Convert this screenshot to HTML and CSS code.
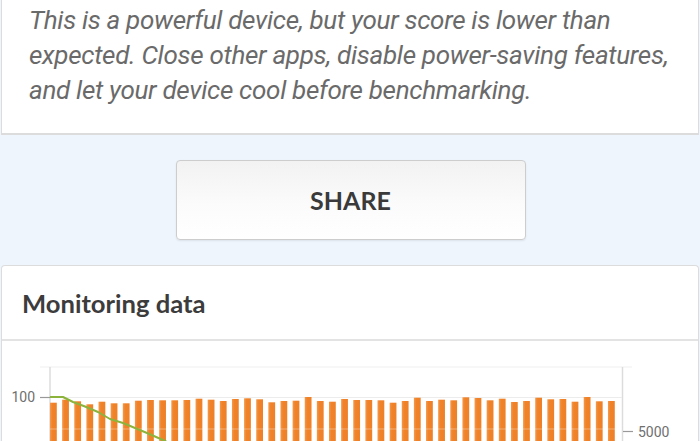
FILE: index.html
```html
<!DOCTYPE html>
<html>
<head>
<meta charset="utf-8">
<link rel="stylesheet" href="styles.css">
</head>
<body>
<div class="card notice">
  <p class="notice-text">This is a powerful device, but your score is lower than expected. Close other apps, disable power-saving features, and let your device cool before benchmarking.</p>
</div>
<div class="share-area">
  <button class="share-btn">SHARE</button>
</div>
<div class="card monitor">
  <div class="monitor-head">Monitoring data</div>
  <div class="monitor-body">
    <svg class="chart" width="696" height="120" viewBox="2 341 696 120" xmlns="http://www.w3.org/2000/svg">
      <defs>
        <linearGradient id="bar" x1="0" y1="0" x2="1" y2="0">
          <stop offset="0" stop-color="#f39a4c"/>
          <stop offset="0.35" stop-color="#f0832a"/>
          <stop offset="1" stop-color="#ee8128"/>
        </linearGradient>
      </defs>
      <line x1="40" y1="367" x2="632" y2="367" stroke="#efefef" stroke-width="1"/>
      <line x1="50" y1="367" x2="50" y2="470" stroke="#dcdcdc" stroke-width="1.5"/>
      <line x1="622.5" y1="367" x2="622.5" y2="470" stroke="#dcdcdc" stroke-width="1.5"/>
      <line x1="40" y1="397.5" x2="622" y2="397.5" stroke="#ececec" stroke-width="1"/>
      <line x1="40" y1="397.5" x2="50" y2="397.5" stroke="#999" stroke-width="1.2"/>
      <text x="35" y="402" class="axis-label" text-anchor="end">100</text>
      <g id="bars" fill="url(#bar)"></g>
      <line x1="50" y1="429" x2="622" y2="429" stroke="rgba(255,255,255,0.35)" stroke-width="1"/>
      <line x1="623" y1="431.5" x2="633" y2="431.5" stroke="#999" stroke-width="1.2"/>
      <text x="638" y="436.5" class="axis-label">5000</text>
      <polyline points="50,397 63,397 73,402 85,406.5 98,412 110,419 123,423 135,428 147,433 163,440 175,446" fill="none" stroke="#8cb43c" stroke-width="2" stroke-linejoin="round"/>
    </svg>
  </div>
</div>
<script src="chart.js"></script>
</body>
</html>
```
FILE: styles.css
```css
html, body {
  margin: 0;
  padding: 0;
}
body {
  width: 700px;
  height: 441px;
  overflow: hidden;
  background: #eef5fc;
  font-family: Roboto, "Liberation Sans", sans-serif;
}
.card {
  background: #fff;
  margin: 0 1px;
  border: 1px solid #dcdcdc;
}
.notice {
  border-top: none;
  border-bottom: 2px solid #dcdcdc;
}
.notice-text {
  margin: 0;
  padding: 3px 14px 25px 27px;
  font-style: italic;
  font-size: 26px;
  line-height: 35px;
  color: #6a6a6a;
  letter-spacing: -0.3px;
}
.share-area {
  display: flex;
  justify-content: center;
  padding: 25px 0 25px;
}
.share-btn {
  width: 350px;
  height: 80px;
  margin-left: 1px;
  border: 1px solid #cdcdcd;
  border-radius: 4px;
  background: linear-gradient(#f2f2f2, #fbfbfb 55%, #ffffff);
  box-shadow: 0 1px 2px rgba(0,0,0,0.08);
  font-family: Lato, "Liberation Sans", sans-serif;
  font-weight: 700;
  font-size: 25px;
  color: #3a3a3a;
  padding: 0;
}
.monitor {
  border-radius: 4px 4px 0 0;
  border-bottom: none;
}
.monitor-head {
  height: 73px;
  border-bottom: 2px solid #e3e3e3;
  display: flex;
  align-items: center;
  padding-left: 20px;
  font-family: Lato, "Liberation Sans", sans-serif;
  font-weight: 700;
  font-size: 25.6px;
  color: #3c3c3c;
}
.monitor-body {
  height: 120px;
}
.chart {
  display: block;
}
.axis-label {
  font-family: Roboto, "Liberation Sans", sans-serif;
  font-size: 14px;
  fill: #6f6f6f;
}
```
FILE: chart.js
```js
(function () {
  var tops = [402.7,399.7,401.3,404.3,401.7,403.3,403.3,400.7,400,400.3,400.3,400,398.7,399.7,401,399,398.3,399.3,402.3,401,400.7,397,401,401.7,399,400,400,400.3,402.7,401,397.7,401,399.7,400.3,397.3,398,400.3,398.7,402,401,397.7,399.3,399,401.7,397,401.3,401];
  var g = document.getElementById('bars');
  var ns = 'http://www.w3.org/2000/svg';
  for (var i = 0; i < tops.length; i++) {
    var r = document.createElementNS(ns, 'rect');
    r.setAttribute('x', (50 + i * 12.13).toFixed(2));
    r.setAttribute('y', tops[i]);
    r.setAttribute('width', 6.8);
    r.setAttribute('height', 480 - tops[i]);
    g.appendChild(r);
  }
})();
```
